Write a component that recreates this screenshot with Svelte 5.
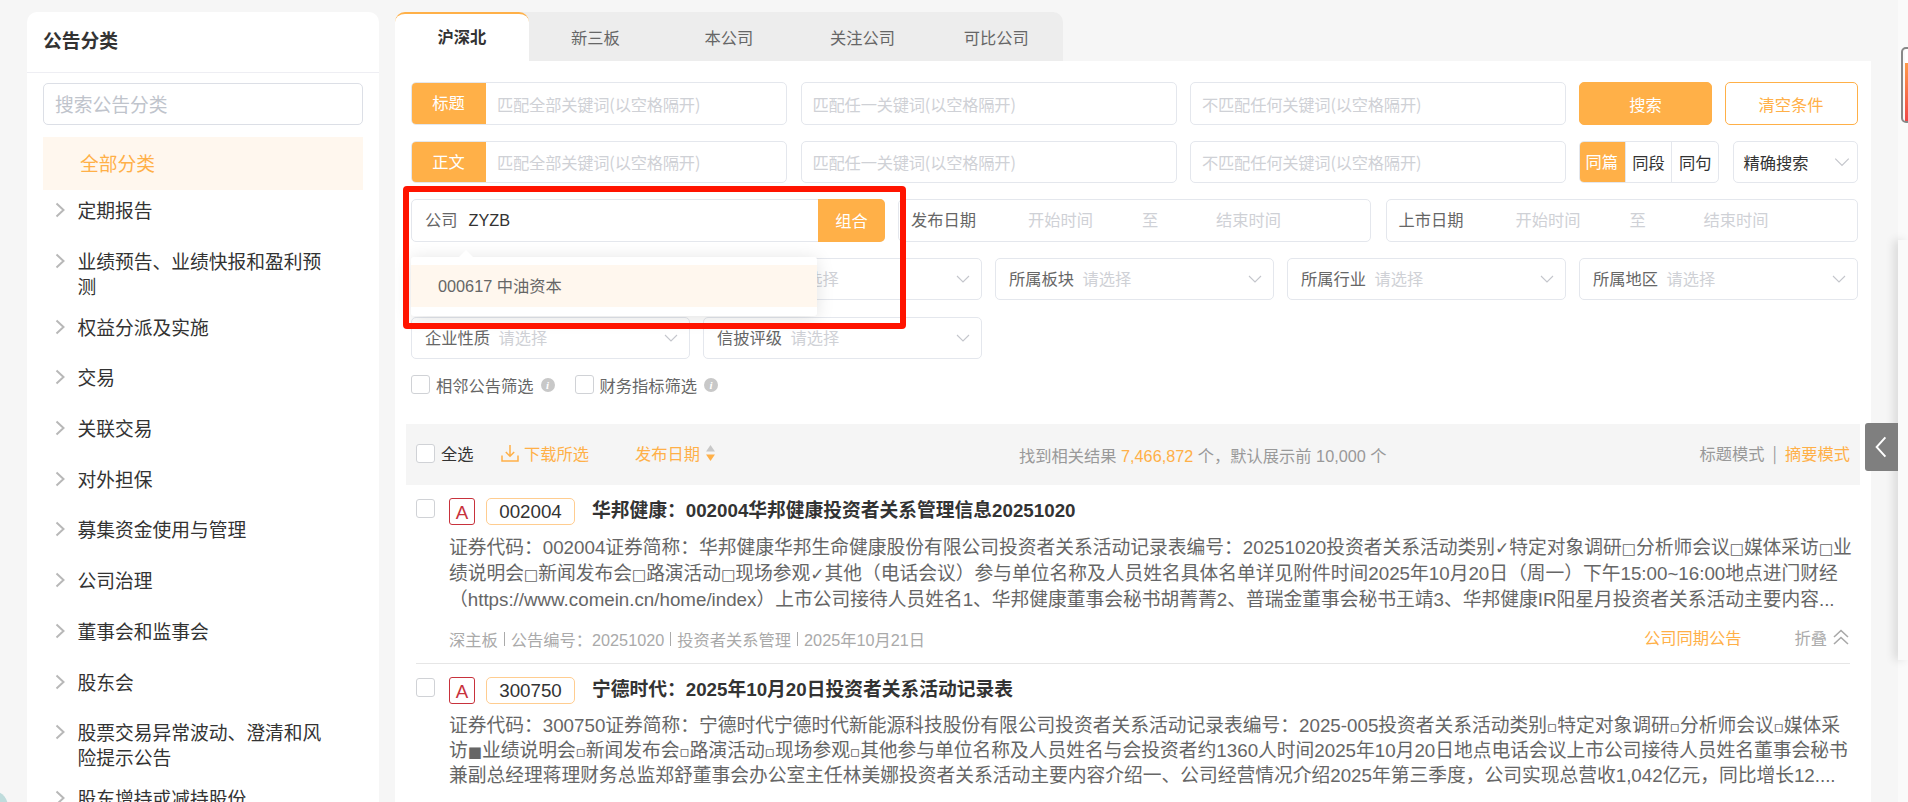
<script lang="ts">
    const categories = [
        '定期报告',
        '业绩预告、业绩快报和盈利预测',
        '权益分派及实施',
        '交易',
        '关联交易',
        '对外担保',
        '募集资金使用与管理',
        '公司治理',
        '董事会和监事会',
        '股东会',
        '股票交易异常波动、澄清和风险提示公告',
        '股东增持或减持股份'
    ];

    const tabs = ['沪深北', '新三板', '本公司', '关注公司', '可比公司'];

    // the first two selects sit behind the suggest popup
    const selects = [
        { label: '', empty: true },
        { label: '', empty: false, offset: true },
        { label: '所属板块', empty: false },
        { label: '所属行业', empty: false },
        { label: '所属地区', empty: false },
        { label: '企业性质', empty: false },
        { label: '信披评级', empty: false }
    ];

    const results = [
        {
            code: '002004',
            title: '华邦健康：002004华邦健康投资者关系管理信息20251020',
            lines: [
                '证券代码：002004证券简称：华邦健康华邦生命健康股份有限公司投资者关系活动记录表编号：20251020投资者关系活动类别✓特定对象调研□分析师会议□媒体采访□业',
                '绩说明会□新闻发布会□路演活动□现场参观✓其他（电话会议）参与单位名称及人员姓名具体名单详见附件时间2025年10月20日（周一）下午15:00~16:00地点进门财经',
                '（https://www.comein.cn/home/index）上市公司接待人员姓名1、华邦健康董事会秘书胡菁菁2、普瑞金董事会秘书王靖3、华邦健康IR阳星月投资者关系活动主要内容...'
            ],
            meta: ['深主板', '公告编号：20251020', '投资者关系管理', '2025年10月21日'],
            open: true
        },
        {
            code: '300750',
            title: '宁德时代：2025年10月20日投资者关系活动记录表',
            lines: [
                '证券代码：300750证券简称：宁德时代宁德时代新能源科技股份有限公司投资者关系活动记录表编号：2025-005投资者关系活动类别▫特定对象调研▫分析师会议▫媒体采',
                '访■业绩说明会▫新闻发布会▫路演活动▫现场参观▫其他参与单位名称及人员姓名与会投资者约1360人时间2025年10月20日地点电话会议上市公司接待人员姓名董事会秘书',
                '兼副总经理蒋理财务总监郑舒董事会办公室主任林美娜投资者关系活动主要内容介绍一、公司经营情况介绍2025年第三季度，公司实现总营收1,042亿元，同比增长12....'
            ],
            meta: [],
            open: false
        }
    ];

    // marks came from a fallback font in the source text, so they get their own size
    const splitMarks = (line: string) => line.split(/([□■▫✓])/);
    const isMark = (part: string) => /^[□■▫✓]$/.test(part);
</script>

{#snippet chevron()}
    <svg class="chev-down" viewBox="0 0 16 16"><path d="M2 5l6 6 6-6" fill="none" stroke="#c4c6cc" stroke-width="1.1" /></svg>
{/snippet}

{#snippet info()}
    <span class="info">i</span>
{/snippet}

<div class="page">
    <aside class="sidebar">
        <h2>公告分类</h2>
        <div class="side-body">
            <div class="side-search">搜索公告分类</div>
            <div class="all-item">全部分类</div>
            <ul class="tree">
                {#each categories as c}
                    <li>
                        <svg class="chev-right" viewBox="0 0 10 16"><path d="M1.5 1.5L8.5 8l-7 6.5" fill="none" stroke="#b8b8b8" stroke-width="2" /></svg>
                        <span>{c}</span>
                    </li>
                {/each}
            </ul>
        </div>
    </aside>

    <main class="main">
        <div class="tabs">
            {#each tabs as t, i}
                <div class="tab" class:active={i === 0}>{t}</div>
            {/each}
        </div>

        <section class="panel">
            <div class="filters">
                <div class="row-kw">
                    <div class="kw first"><span class="kw-label">标题</span><span class="ph">匹配全部关键词(以空格隔开)</span></div>
                    <div class="kw"><span class="ph">匹配任一关键词(以空格隔开)</span></div>
                    <div class="kw"><span class="ph">不匹配任何关键词(以空格隔开)</span></div>
                    <div class="btns">
                        <button class="btn-fill">搜索</button>
                        <button class="btn-line">清空条件</button>
                    </div>
                </div>
                <div class="row-kw">
                    <div class="kw first"><span class="kw-label">正文</span><span class="ph">匹配全部关键词(以空格隔开)</span></div>
                    <div class="kw"><span class="ph">匹配任一关键词(以空格隔开)</span></div>
                    <div class="kw"><span class="ph">不匹配任何关键词(以空格隔开)</span></div>
                    <div class="btns">
                        <div class="segment">
                            <span class="on">同篇</span><span>同段</span><span>同句</span>
                        </div>
                        <div class="exact">精确搜索 {@render chevron()}</div>
                    </div>
                </div>
                <div class="row-date">
                    <div class="company">
                        <span class="lbl">公司</span>
                        <span class="val">ZYZB</span>
                        <span class="combo">组合</span>
                        <div class="suggest">
                            <i class="arrow"></i>
                            <div class="suggest-item">000617 中油资本</div>
                        </div>
                    </div>
                    <div class="date"><span class="lbl d1">发布日期</span><span class="ph d2">开始时间</span><span class="ph d3">至</span><span class="ph">结束时间</span></div>
                    <div class="date"><span class="lbl d1">上市日期</span><span class="ph d2">开始时间</span><span class="ph d3">至</span><span class="ph">结束时间</span></div>
                </div>
                <div class="row-select">
                    {#each selects as s}
                        <div class="select" class:offset={s.offset}>
                            {#if s.label}<span class="lbl">{s.label}</span>{/if}
                            {#if !s.empty}<span class="ph">请选择</span>{/if}
                            {@render chevron()}
                        </div>
                    {/each}
                </div>
                <div class="row-check">
                    <label class="chk"><i class="box"></i>相邻公告筛选{@render info()}</label>
                    <label class="chk"><i class="box"></i>财务指标筛选{@render info()}</label>
                </div>
                <div class="red-mark"></div>
            </div>

            <div class="toolbar">
                <div class="tool-left">
                    <label class="all"><i class="box"></i>全选</label>
                    <span class="dl">
                        <svg viewBox="0 0 18 18"><path d="M9 1v11M4.8 8L9 12.2 13.2 8M1 11.5V17h16v-5.5" fill="none" stroke="#ffb048" stroke-width="1.5" /></svg>
                        下载所选
                    </span>
                    <span class="sort">
                        发布日期
                        <svg viewBox="0 0 9 16"><path d="M4.5 0L9 6.5H0z" fill="#c8c8c8" /><path d="M4.5 16L9 9.5H0z" fill="#ffb048" /></svg>
                    </span>
                </div>
                <div class="count">找到相关结果 <em>7,466,872</em> 个，默认展示前 10,000 个</div>
                <div class="mode">标题模式<i>|</i><em>摘要模式</em></div>
            </div>

            {#each results as r}
                <article class="result">
                    <i class="box"></i>
                    <div class="res-body">
                        <div class="res-head">
                            <span class="tag-a">A</span>
                            <span class="tag-code">{r.code}</span>
                            <h3>{r.title}</h3>
                        </div>
                        <div class="res-text" class:tight={!r.open}>
                            {#each r.lines as l}
                                <p>{#each splitMarks(l) as part}{#if isMark(part)}<span class="mark" class:check={part === '✓'}>{part}</span>{:else}{part}{/if}{/each}</p>
                            {/each}
                        </div>
                        {#if r.open}
                            <div class="res-meta">
                                <div class="meta-left">
                                    {#each r.meta as m, i}
                                        {#if i > 0}<i></i>{/if}<span>{m}</span>
                                    {/each}
                                </div>
                                <span class="same">公司同期公告</span>
                                <span class="fold">折叠
                                    <svg viewBox="0 0 18 16"><path d="M2 8l7-6.5L16 8M2 15l7-6.5L16 15" fill="none" stroke="#a8a8a8" stroke-width="1.6" /></svg>
                                </span>
                            </div>
                        {/if}
                    </div>
                </article>
            {/each}
        </section>
    </main>

    <div class="strip"></div>
    <div class="drawer"></div>
    <div class="collapse">
        <svg viewBox="0 0 16 26"><path d="M13 2L3 13l10 11" fill="none" stroke="#fff" stroke-width="2.2" /></svg>
    </div>
    <div class="edge-widget"></div>
    <div class="corner-blob"></div>
</div>

<style>
    :global(body) {
        margin: 0;
        background: #f6f6f6;
        font-family: "Noto Sans CJK SC", "Liberation Sans", sans-serif;
        color: #333;
    }

    .page {
        position: relative;
        height: 802px;
        overflow: hidden;
        display: flex;
        align-items: flex-start;
        padding: 12px 37px 0 27px;
        gap: 16px;
        box-sizing: border-box;
        background: #f6f6f6;
    }

    /* left tree */
    .sidebar {
        width: 352px;
        flex: none;
        height: 900px;
        background: #fff;
        border-radius: 10px 10px 0 0;
    }

    .sidebar h2 {
        margin: 0;
        height: 60px;
        line-height: 55px;
        padding-left: 16px;
        font-size: 18.75px;
        font-weight: 700;
        color: #333;
        border-bottom: 1px solid #eeeef3;
        box-sizing: content-box;
    }

    .side-body {
        padding: 10px 16px 0;
    }

    .side-search {
        height: 42px;
        line-height: 40px;
        box-sizing: border-box;
        border: 1px solid #dcdfe6;
        border-radius: 5px;
        padding-left: 11px;
        font-size: 18.75px;
        color: #c0c4cc;
    }

    .all-item {
        margin-top: 12px;
        height: 53px;
        line-height: 52px;
        padding-left: 37px;
        background: #fff7ee;
        color: #ffb048;
        font-size: 18.75px;
    }

    .tree {
        list-style: none;
        margin: 7px 0 0;
        padding: 0;
    }

    .tree li {
        display: flex;
        min-height: 40.7px;
        margin-bottom: 10px;
        padding-bottom: 6px;
        box-sizing: border-box;
        font-size: 18.75px;
        line-height: 25px;
        color: #333;
    }

    .tree li span {
        width: 256px;
    }

    .chev-right {
        width: 10px;
        height: 16px;
        flex: none;
        margin: 5px 12.5px 0 12px;
    }

    /* right column */
    .main {
        width: 1476px;
        flex: none;
    }

    .tabs {
        display: flex;
        width: 668px;
        height: 49px;
        background: #ededed;
        border-radius: 10px 10px 0 0;
    }

    .tab {
        width: 133.6px;
        line-height: 50px;
        text-align: center;
        font-size: 16.25px;
        color: #666;
    }

    .tab.active {
        background: #fff;
        color: #333;
        font-weight: 700;
        border-top: 2px solid #ffb048;
        border-radius: 10px 10px 0 0;
        line-height: 44px;
        box-sizing: border-box;
    }

    .panel {
        background: #fff;
        height: 760px;
        padding: 21px 0 0 11px;
        box-sizing: border-box;
    }

    .filters {
        position: relative;
        padding: 0 13px 0 5px;
        display: flex;
        flex-direction: column;
    }

    .row-kw {
        display: grid;
        grid-template-columns: 376px 376px 375.5px 278.5px;
        column-gap: 13.5px;
        height: 43px;
        margin-bottom: 16px;
    }

    .row-kw + .row-kw {
        height: 42px;
    }

    .kw {
        display: flex;
        align-items: center;
        border: 1px solid #e4e7ed;
        border-radius: 5px;
        padding-left: 11px;
        box-sizing: border-box;
        font-size: 16.25px;
        overflow: hidden;
        white-space: nowrap;
    }

    .kw.first {
        padding-left: 0;
    }

    .kw-label {
        width: 75px;
        height: 43px;
        flex: none;
        line-height: 41px;
        margin: -1px 11px -1px -1px;
        background: #ffb048;
        color: #fff;
        text-align: center;
    }

    .ph {
        color: #cfd1d6;
        font-size: 16.25px;
        white-space: nowrap;
    }

    .kw .ph {
        letter-spacing: -0.2px;
    }

    .lbl {
        color: #666;
        font-size: 16.25px;
        white-space: nowrap;
    }

    .btns {
        display: flex;
        justify-content: space-between;
        align-items: stretch;
    }

    .btns button {
        width: 133px;
        font: inherit;
        font-size: 16.25px;
        border-radius: 5px;
        cursor: pointer;
    }

    .btn-fill {
        background: #ffb048;
        border: 1px solid #ffb048;
        color: #fff;
    }

    .btn-line {
        background: #fff;
        border: 1px solid #ffb048;
        color: #ffb048;
    }

    .segment {
        display: flex;
        width: 140px;
        border: 1px solid #e4e7ed;
        border-radius: 5px;
        box-sizing: border-box;
        overflow: hidden;
        font-size: 16.25px;
        color: #333;
    }

    .segment span {
        flex: 1;
        text-align: center;
        line-height: 40px;
        border-left: 1px solid #e4e7ed;
    }

    .segment .on {
        background: #ffb048;
        color: #fff;
        border-left: 0;
        margin: -1px 0 -1px -1px;
    }

    .exact {
        position: relative;
        width: 125px;
        border: 1px solid #e4e7ed;
        border-radius: 5px;
        box-sizing: border-box;
        padding-left: 10px;
        line-height: 40px;
        font-size: 16.25px;
        color: #333;
    }

    .exact .chev-down {
        position: absolute;
        right: 6px;
        top: 11px;
        width: 18px;
        height: 18px;
    }

    .row-date {
        display: flex;
        gap: 15px;
        height: 43px;
        margin-bottom: 16px;
    }

    .company {
        position: relative;
        width: 474px;
        margin-right: -2px;
        flex: none;
        display: flex;
        align-items: center;
        border: 1px solid #e4e7ed;
        border-radius: 5px;
        box-sizing: border-box;
        padding: 0 0 3px 13px;
    }

    .val {
        margin: 3px 0 0 11px;
        font-family: "Liberation Sans", "Noto Sans CJK SC", sans-serif;
        font-size: 16.25px;
        color: #333;
    }

    .combo {
        position: absolute;
        right: -1px;
        top: -1px;
        bottom: -1px;
        width: 67px;
        background: #ffb048;
        color: #fff;
        font-size: 16.25px;
        line-height: 42px;
        text-align: center;
        border-radius: 0 5px 5px 0;
    }

    .suggest {
        position: absolute;
        z-index: 5;
        left: -1px;
        top: 57px;
        width: 406px;
        height: 59px;
        padding-top: 8px;
        box-sizing: border-box;
        background: #fff;
        border-radius: 3px;
        box-shadow: 0 2px 18px rgba(0, 0, 0, 0.12);
    }

    .arrow {
        position: absolute;
        left: 48px;
        top: -7px;
        border: 7px solid transparent;
        border-top: 0;
        border-bottom-color: #fff;
    }

    .suggest-item {
        height: 42px;
        line-height: 43px;
        padding-left: 27px;
        background: #fff7ee;
        color: #666;
        font-family: "Liberation Sans", "Noto Sans CJK SC", sans-serif;
        font-size: 16.25px;
    }

    .date {
        flex: 1;
        display: flex;
        align-items: center;
        border: 1px solid #e4e7ed;
        border-radius: 5px;
        box-sizing: border-box;
        padding: 0 0 3px 12px;
    }

    .d1 {
        width: 117px;
    }

    .d2 {
        width: 114px;
    }

    .d3 {
        width: 74px;
    }

    .row-select {
        display: grid;
        grid-template-columns: repeat(5, 278.5px);
        gap: 17px 13.5px;
    }

    .select {
        position: relative;
        height: 42px;
        display: flex;
        align-items: center;
        gap: 8.5px;
        border: 1px solid #e4e7ed;
        border-radius: 5px;
        box-sizing: border-box;
        padding: 0 0 2px 13px;
    }

    .select.offset {
        padding-left: 86px;
    }

    .select .chev-down {
        position: absolute;
        right: 10px;
        top: 12px;
        width: 16px;
        height: 16px;
    }

    .row-check {
        display: flex;
        gap: 20px;
        margin-top: 16px;
        height: 19px;
    }

    .chk, .all {
        display: flex;
        align-items: center;
        font-size: 16.25px;
        color: #666;
        white-space: nowrap;
    }

    .box {
        display: block;
        width: 19px;
        height: 19px;
        flex: none;
        box-sizing: border-box;
        border: 1px solid #d0d2d6;
        border-radius: 3px;
        background: #fff;
        margin-right: 6px;
    }

    .info {
        display: inline-block;
        width: 14px;
        height: 14px;
        margin-left: 7px;
        border-radius: 50%;
        background: #c8c8c8;
        color: #fff;
        font: italic 700 11px/14px "Liberation Serif", serif;
        text-align: center;
    }

    .red-mark {
        position: absolute;
        z-index: 6;
        left: -3px;
        top: 104px;
        width: 503px;
        height: 143px;
        box-sizing: border-box;
        border: 6.5px solid #ff1400;
        border-radius: 4px;
        pointer-events: none;
    }

    /* result list */
    .toolbar {
        display: flex;
        align-items: center;
        width: 1454px;
        height: 61px;
        margin-top: 30px;
        padding: 0 10px 3px;
        box-sizing: border-box;
        background: #f5f5f5;
        font-size: 16.25px;
        color: #999;
    }

    .tool-left {
        display: flex;
        align-items: center;
        width: 603px;
        flex: none;
    }

    .all {
        color: #333;
        width: 85px;
    }

    .dl {
        display: flex;
        align-items: center;
        gap: 5px;
        color: #ffb048;
        width: 134px;
    }

    .dl svg {
        width: 18px;
        height: 18px;
    }

    .sort {
        display: flex;
        align-items: center;
        gap: 6px;
        color: #ffb048;
    }

    .sort svg {
        width: 9px;
        height: 16px;
    }

    .count {
        flex: 1;
        padding-top: 3px;
        font-family: "Liberation Sans", "Noto Sans CJK SC", sans-serif;
    }

    .toolbar em {
        font-style: normal;
        color: #ffb048;
    }

    .mode i {
        font-style: normal;
        margin: 0 8px;
    }

    .result {
        display: flex;
        width: 1434px;
        margin-left: 10px;
        padding-top: 13px;
        box-sizing: border-box;
        border-bottom: 1px solid #e6e6e6;
    }

    .result:last-child {
        border-bottom: 0;
    }

    .result .box {
        margin: 1px 14px 0 0;
    }

    .res-body {
        flex: 1;
        min-width: 0;
    }

    .res-head {
        display: flex;
        align-items: center;
        height: 27px;
    }

    .tag-a {
        width: 26px;
        height: 27px;
        flex: none;
        box-sizing: border-box;
        border: 1px solid #c8323c;
        border-radius: 3px;
        color: #c8323c;
        font-family: "Liberation Sans", sans-serif;
        font-size: 18.75px;
        line-height: 27px;
        text-align: center;
    }

    .tag-code {
        width: 89px;
        height: 27px;
        flex: none;
        margin: 0 17px 0 11px;
        box-sizing: border-box;
        border: 1px solid #ffcd90;
        border-radius: 5px;
        font-family: "Liberation Sans", sans-serif;
        font-size: 18.75px;
        line-height: 25px;
        text-align: center;
        color: #333;
    }

    .res-head h3 {
        margin: 0 0 6px;
        font-family: "Liberation Sans", "Noto Sans CJK SC", sans-serif;
        font-size: 18.75px;
        font-weight: 700;
        color: #333;
    }

    .res-text {
        margin-top: 10px;
    }

    .res-text p {
        margin: 0;
        font-family: "Liberation Sans", "Noto Sans CJK SC", sans-serif;
        font-size: 18.75px;
        line-height: 26px;
        color: #666;
        white-space: nowrap;
    }

    .res-text.tight {
        margin-top: 9px;
    }

    .res-text.tight p {
        line-height: 25px;
    }

    .mark {
        font-family: "DejaVu Sans", sans-serif;
        font-size: 15px;
        line-height: 1;
    }

    .mark.check {
        font-size: 17px;
    }

    .res-meta {
        display: flex;
        align-items: center;
        height: 26px;
        margin: 11px 0 13px;
        font-size: 16.25px;
        color: #aaa;
    }

    .meta-left {
        flex: 1;
        display: flex;
        align-items: center;
        padding-top: 3px;
        font-family: "Liberation Sans", "Noto Sans CJK SC", sans-serif;
    }

    .meta-left i {
        width: 1px;
        height: 14px;
        margin: 0 6px;
        background: #aaa;
    }

    .same {
        color: #ffb048;
        margin-right: 53px;
    }

    .fold {
        display: flex;
        align-items: center;
        gap: 5px;
    }

    .fold svg {
        width: 18px;
        height: 16px;
    }

    .strip {
        position: absolute;
        left: 1898px;
        top: 0;
        bottom: 0;
        width: 10px;
        background: #fafafa;
    }

    .drawer {
        position: absolute;
        left: 1898px;
        top: 240px;
        width: 10px;
        height: 420px;
        background: #fafafa;
        box-shadow: -4px 0 10px rgba(0, 0, 0, 0.12);
    }

    .collapse {
        position: absolute;
        left: 1864.5px;
        top: 423px;
        width: 33.5px;
        height: 48px;
        display: flex;
        align-items: center;
        justify-content: center;
        background: #7f7f7f;
        border-radius: 3px 0 0 3px;
    }

    .collapse svg {
        width: 14px;
        height: 24px;
    }

    .edge-widget {
        position: absolute;
        left: 1901px;
        top: 47px;
        width: 14px;
        height: 76px;
        box-sizing: border-box;
        border: 2.5px solid #888;
        border-radius: 5px;
        background: linear-gradient(#fff 0 14px, #ff9a4a 14px, #f04848) 2px 0 no-repeat;
    }

    .corner-blob {
        position: absolute;
        left: -16px;
        top: 792px;
        width: 24px;
        height: 30px;
        border-radius: 50%;
        background: #bfdcdc;
    }
</style>
